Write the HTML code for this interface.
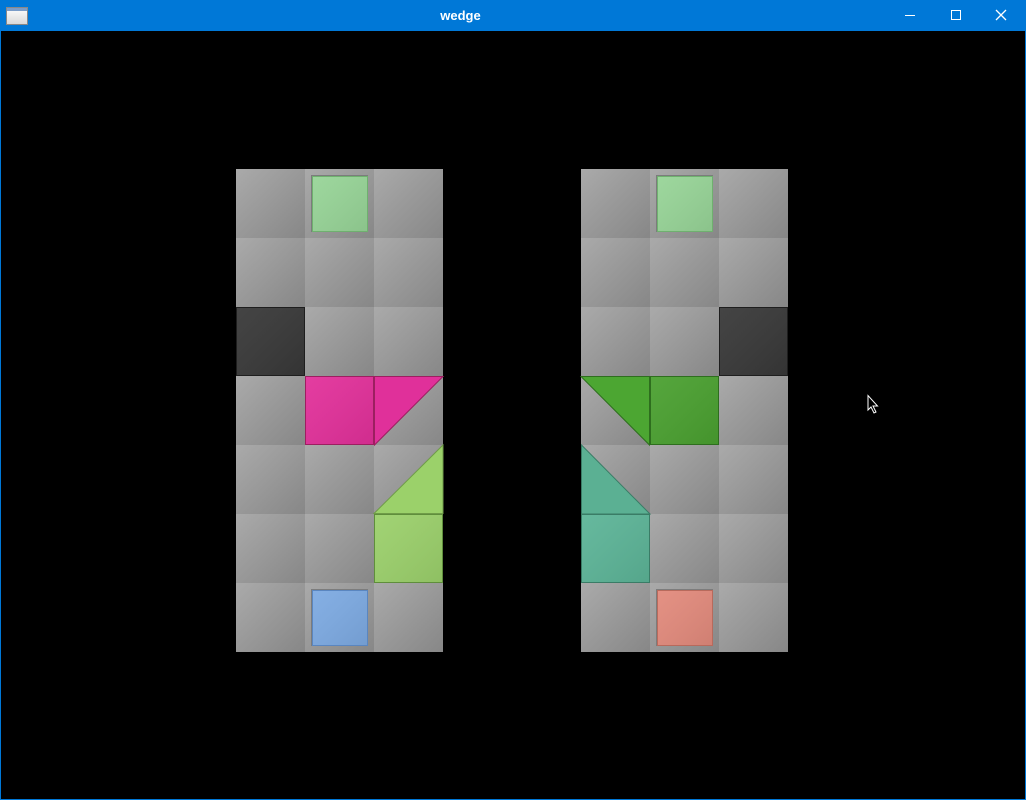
<!DOCTYPE html>
<html><head><meta charset="utf-8"><style>
html,body{margin:0;padding:0;background:#000;width:1026px;height:800px;overflow:hidden;font-family:"Liberation Sans",sans-serif}
.tb{position:absolute;left:0;top:0;width:1026px;height:31px;background:#0078d7}
.t{position:absolute;left:0;width:921px;top:8px;text-align:center;color:#fff;font-weight:bold;font-size:13px}
.frame{position:absolute;left:0;top:31px;width:1024px;height:768px;border:1px solid #0078d7;border-top:none}
</style></head><body>
<div class="tb"><div class="t">wedge</div>
<svg width="1026" height="31" style="position:absolute;left:0;top:0">
<defs><linearGradient id="ic" x1="0" y1="0" x2="0" y2="1"><stop offset="0" stop-color="#fff"/><stop offset="1" stop-color="#d8d8d8"/></linearGradient></defs>
<rect x="6.5" y="7.5" width="21" height="17" fill="url(#ic)" stroke="#888"/>
<rect x="7" y="8" width="20" height="3" fill="#7a9cc8"/>
<line x1="905" y1="15.5" x2="915" y2="15.5" stroke="#fff"/>
<rect x="951.5" y="10.5" width="9" height="9" fill="none" stroke="#fff"/>
<path d="M996 10 L1006 20 M1006 10 L996 20" stroke="#fff" stroke-width="1.3"/>
</svg></div>
<div class="frame"></div>
<svg width="1026" height="800" style="position:absolute;left:0;top:0">
<defs>
<linearGradient id="c" x1="0" y1="0" x2="1" y2="1"><stop offset="0" stop-color="#aaa"/><stop offset="1" stop-color="#878787"/></linearGradient>
<linearGradient id="sh" x1="0" y1="0" x2="1" y2="1"><stop offset="0" stop-color="#fff" stop-opacity=".06"/><stop offset="1" stop-color="#000" stop-opacity=".08"/></linearGradient>
</defs>
<g id="L" transform="translate(236,169)"></g>
<g id="R" transform="translate(581,169)"></g>
<path d="M868 395.5 L868 410 L871 407 L874 413 L876 412 L873 406 L877.5 406 Z" fill="#000" stroke="#fff" stroke-width="1"/>
</svg>
<script>
function cells(){var s='';for(var r=0;r<7;r++)for(var c=0;c<3;c++)s+='<rect x="'+c*69+'" y="'+r*69+'" width="69" height="69" fill="url(#c)"/>';return s;}
function full(c,r,f,b){return '<rect x="'+(c*69+0.5)+'" y="'+(r*69+0.5)+'" width="68" height="68" fill="'+f+'" stroke="'+b+'"/><rect x="'+(c*69+1)+'" y="'+(r*69+1)+'" width="67" height="67" fill="url(#sh)"/>';}
function inset(c,r,f,b){return '<rect x="'+(c*69+6)+'" y="'+(r*69+6)+'" width="57" height="57" fill="#7c7c7c"/><rect x="'+(c*69+7.5)+'" y="'+(r*69+7.5)+'" width="55" height="55" fill="'+f+'" stroke="'+b+'"/><rect x="'+(c*69+8)+'" y="'+(r*69+8)+'" width="54" height="54" fill="url(#sh)"/>';}
function tri(c,r,pts,f,b){var x=c*69,y=r*69;var p=pts.map(function(q){return (x+q[0])+','+(y+q[1])}).join(' ');return '<polygon points="'+p+'" fill="'+f+'" stroke="'+b+'"/>';}
var D='#383838',DB='#1e1e1e';
document.getElementById('L').innerHTML=cells()+inset(1,0,'#97d497','#6fb06f')+full(0,2,D,DB)+full(1,3,'#e2309a','#9c1f60')+tri(2,3,[[0.5,0.5],[69,0.5],[0.5,69]],'#e0309a','#9c1f60')+tri(2,4,[[69,0],[69,68.5],[0,68.5]],'#9bd16a','#6f9c48')+full(2,5,'#9bd06b','#5f8e3c')+inset(1,6,'#7daae2','#5a86c0');
document.getElementById('R').innerHTML=cells()+inset(1,0,'#97d497','#6fb06f')+full(2,2,D,DB)+tri(0,3,[[0,0.5],[68.5,0.5],[68.5,69]],'#4ca632','#2e6e1e')+full(1,3,'#4aa030','#2e6e1e')+tri(0,4,[[0.5,0],[69,69],[0.5,69]],'#5bb093','#3a7c66')+full(0,5,'#5cb497','#3a7c66')+inset(1,6,'#e28a7c','#b86a5c');
</script>
</body></html>
